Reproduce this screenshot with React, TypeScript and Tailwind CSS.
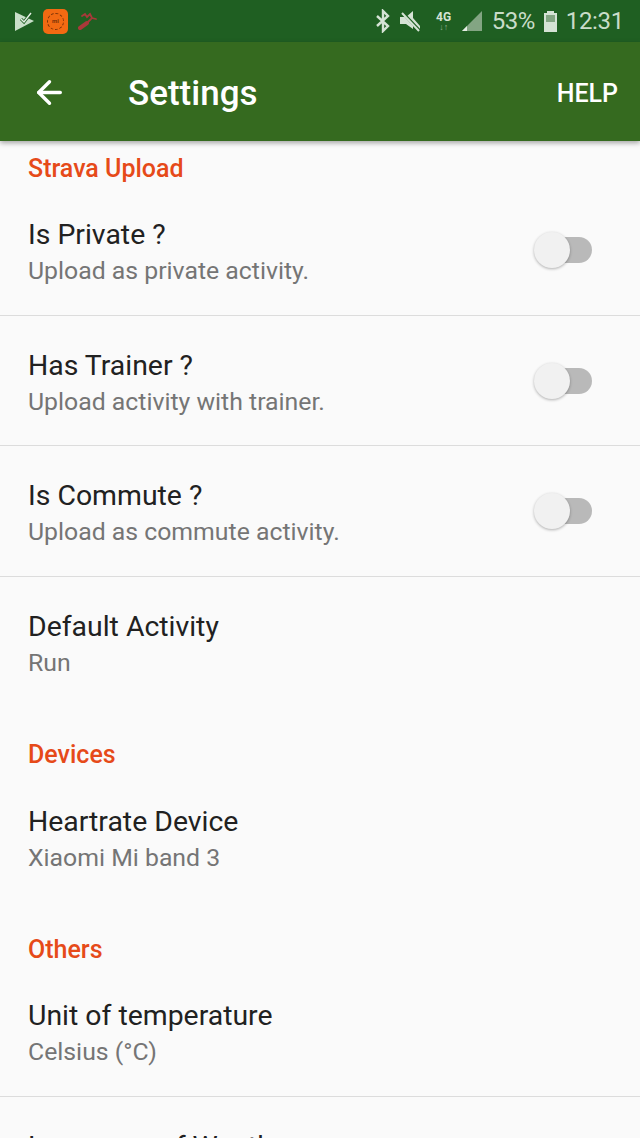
import { ArrowLeft } from 'lucide-react';

const stravaRows = [
  { title: 'Is Private ?', summary: 'Upload as private activity.' },
  { title: 'Has Trainer ?', summary: 'Upload activity with trainer.' },
  { title: 'Is Commute ?', summary: 'Upload as commute activity.' },
];

function Toggle() {
  return (
    <div className="relative h-[26px] w-[58px] shrink-0">
      <div className="absolute left-[10px] right-0 top-0 h-[26px] rounded-full bg-[#b9b9b9]" />
      <div className="absolute left-0 top-[-5px] h-9 w-9 rounded-full bg-[#f1f1f1] shadow-[0_1px_3px_rgba(0,0,0,0.3)]" />
    </div>
  );
}

function Row({ title, summary, toggle, divider }: { title: string; summary: string; toggle?: boolean; divider?: boolean }) {
  return (
    <div className={`flex h-[130.6px] items-start pl-[28px] pr-[48px] pt-[32px] ${divider ? 'border-b border-[#dcdcdc]' : ''}`}>
      <div className="flex-1">
        <div className="text-[28.4px] leading-[36px] text-[#212121]">{title}</div>
        <div className="text-[24.8px] leading-[36px] text-[#757575]">{summary}</div>
      </div>
      {toggle && (
        <div className="mt-[20px]">
          <Toggle />
        </div>
      )}
    </div>
  );
}

function SectionTitle({ children, className }: { children: string; className: string }) {
  return (
    <div className={`flex items-end pl-[28px] text-[25px] leading-[32px] font-medium text-[#e64a19] ${className}`}>
      {children}
    </div>
  );
}

function StatusBar() {
  return (
    <div className="flex h-[42px] items-center bg-[#1f5f22] pl-[15px] pr-[16px] text-[#c9dcc9]">
      <svg width="20" height="22" viewBox="0 0 20 22" fill="none">
        <path d="M0 2l19 9L0 21z" fill="#c9dfc9" />
        <path d="M6 9l3 3 7-9" stroke="#1f5f22" strokeWidth="3" />
        <path d="M6 9l3 3 7-9" stroke="#e6f0e6" strokeWidth="1.4" />
      </svg>
      <div className="ml-[8px] flex h-[25px] w-[25px] items-center justify-center rounded-[5px] bg-[#f26a12]">
        <div className="flex h-[17px] w-[17px] items-center justify-center rounded-full border border-dashed border-[#7a3208] text-[6px] leading-none font-bold text-[#7a3208]">
          mi
        </div>
      </div>
      <svg className="ml-[10px]" width="20" height="20" viewBox="0 0 20 20" fill="none" stroke="#a8393a" strokeLinecap="round">
        <path d="M2 17l7-5" strokeWidth="4" />
        <path d="M4 5l3-2 2 3 3-3 2 4 4 1M10 11l3-3" strokeWidth="1.8" />
      </svg>
      <div className="ml-auto flex items-center">
        <svg width="16" height="24" viewBox="0 0 16 24" fill="none" stroke="#d5e3d5" strokeWidth="2.4">
          <path d="M2 7l11 10-5 5V2l5 5L2 17" />
        </svg>
        <svg className="ml-[9px]" width="22" height="22" viewBox="0 0 22 22" fill="#d5e3d5">
          <path d="M0 7h6l7-6v18l-7-5H0z" />
          <path d="M13 8l7 8v4h-1l-6-6z" />
          <path d="M1 1l19 20" stroke="#1f5f22" strokeWidth="3" />
          <path d="M2 3l17 18" stroke="#d5e3d5" strokeWidth="2" />
        </svg>
        <div className="ml-[13px] flex w-[18px] flex-col items-center text-[12px] leading-[12px] font-bold text-[#d5e3d5]">
          4G
          <span className="text-[9px] leading-[9px] text-[#8fb08f]">↓↑</span>
        </div>
        <svg className="ml-[8px]" width="22" height="22" viewBox="0 0 22 22">
          <path d="M21 1v20H1z" fill="#83a583" />
          <path d="M6 21H1l5-5z" fill="#e4eee4" />
        </svg>
        <span className="ml-[9px] text-[24px] leading-none tracking-[-0.5px]">53%</span>
        <svg className="ml-[8px]" width="15" height="22" viewBox="0 0 15 22">
          <path d="M4 1h7v2h3v19H1V3h3z" fill="#d5e3d5" />
          <rect x="3" y="5" width="9" height="7" fill="#83a583" />
        </svg>
        <span className="ml-[8px] text-[24px] leading-none tracking-[-0.3px]">12:31</span>
      </div>
    </div>
  );
}

export default function App() {
  return (
    <div className="h-[1138px] w-[640px] overflow-hidden bg-[#fafafa] font-['Roboto',sans-serif]">
      <StatusBar />

      {/* Toolbar */}
      <div className="relative z-10 flex h-[99px] items-center bg-[#356a1f] pl-[31px] pr-[22px] pt-[2px] text-white shadow-[0_2px_5px_rgba(0,0,0,0.35)]">
        <ArrowLeft size={37} strokeWidth={2.2} />
        <div className="ml-[60px] mt-[2px] text-[35px] leading-none font-medium">Settings</div>
        <div className="ml-auto mt-[2px] text-[25px] leading-none font-medium">HELP</div>
      </div>

      <SectionTitle className="h-[44px]">Strava Upload</SectionTitle>
      {stravaRows.map((row) => (
        <Row key={row.title} title={row.title} summary={row.summary} toggle divider />
      ))}
      <Row title="Default Activity" summary="Run" />

      <SectionTitle className="h-[65px] pb-[1px]">Devices</SectionTitle>
      <Row title="Heartrate Device" summary="Xiaomi Mi band 3" />

      <SectionTitle className="h-[63px]">Others</SectionTitle>
      <Row title="Unit of temperature" summary="Celsius (°C)" divider />
      <Row title="Language of Weather" summary="English" />
    </div>
  );
}
